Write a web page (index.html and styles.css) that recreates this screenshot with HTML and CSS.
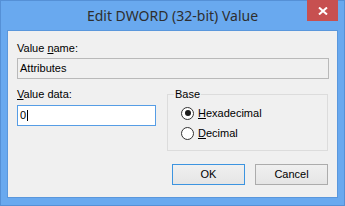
FILE: index.html
```html
<!DOCTYPE html>
<html lang="en">
<head>
    <meta charset="UTF-8">
    <title>Edit DWORD (32-bit) Value</title>
    <link rel="stylesheet" href="styles.css">
</head>
<body>
    <div class="window">
        <div class="titlebar">
            <span class="title">Edit DWORD (32-bit) Value</span>
            <button class="close" aria-label="Close">
                <svg width="10" height="8" viewBox="0 0 10 8">
                    <path d="M1 0.5 L9 7.5 M9 0.5 L1 7.5" stroke="#fff" stroke-width="2" fill="none"/>
                </svg>
            </button>
        </div>
        <div class="client">
            <div class="label">Value <u>n</u>ame:</div>
            <div class="textbox readonly">Attributes</div>

            <div class="row">
                <div class="data">
                    <div class="label"><u>V</u>alue data:</div>
                    <div class="textbox focused">0<span class="caret"></span></div>
                </div>
                <fieldset class="base">
                    <legend>Base</legend>
                    <label class="radio"><span class="dot checked"></span><u>H</u>exadecimal</label>
                    <label class="radio"><span class="dot"></span><u>D</u>ecimal</label>
                </fieldset>
            </div>

            <div class="buttons">
                <button class="btn default">OK</button>
                <button class="btn">Cancel</button>
            </div>
        </div>
    </div>
</body>
</html>
```

FILE: styles.css
```css
* {
    box-sizing: border-box;
}
body {
    margin: 0;
    font-family: "Liberation Sans", Arial, sans-serif;
    font-size: 11px;
    color: #000;
}
.window {
    width: 345px;
    height: 206px;
    background: #69a9ef;
    border: 1px solid #5590d6;
    padding: 0 6px 7px;
    display: flex;
    flex-direction: column;
}
.titlebar {
    position: relative;
    height: 29px;
    display: flex;
    align-items: center;
    justify-content: center;
    font-family: "Noto Sans", sans-serif;
    font-size: 14px;
    color: #2e2e2e;
}
.close {
    position: absolute;
    top: -1px;
    right: 0;
    width: 31px;
    height: 21px;
    background: #c75050;
    border: none;
    padding: 0;
    display: flex;
    align-items: center;
    justify-content: center;
}
.client {
    flex: 1;
    background: #f0f0f0;
    border: 1px solid #5a97dc;
    padding: 11px 8px 0 9px;
    line-height: 13px;
}
.textbox {
    height: 21px;
    margin-top: 3px;
    padding: 0 2px;
    border: 1px solid #b9b9b9;
    display: flex;
    align-items: center;
}
.readonly {
    background: #f0f0f0;
}
.focused {
    margin-top: 4px;
    background: #fff;
    border-color: #569de5;
}
.caret {
    width: 1px;
    height: 11px;
    margin-left: 1px;
    background: #000;
}
.row {
    display: flex;
    gap: 11px;
    padding-top: 9px;
    margin-right: 1px;
}
.data {
    width: 139px;
}
.base {
    flex: 1;
    min-width: 0;
    margin: 0;
    padding: 2px 8px 7px 6px;
    border: 1px solid #dcdcdc;
}
.base legend {
    padding: 0 1px;
    line-height: 13px;
}
.radio {
    display: flex;
    align-items: center;
    height: 20px;
    margin-left: 7px;
}
.dot {
    width: 13px;
    height: 13px;
    margin-right: 4px;
    border: 1px solid #333;
    border-radius: 50%;
    background: #fff;
    display: flex;
    align-items: center;
    justify-content: center;
}
.dot.checked::after {
    content: "";
    width: 6px;
    height: 6px;
    border-radius: 50%;
    background: #1a1a1a;
}
.buttons {
    display: flex;
    justify-content: flex-end;
    gap: 10px;
    margin-top: 13px;
    margin-right: 1px;
}
.btn {
    width: 73px;
    height: 21px;
    padding: 0;
    border: 1px solid #acacac;
    background: linear-gradient(#f0f0f0, #e5e5e5);
    font: inherit;
    color: #000;
}
.btn.default {
    border-color: #3c94e0;
}
```
